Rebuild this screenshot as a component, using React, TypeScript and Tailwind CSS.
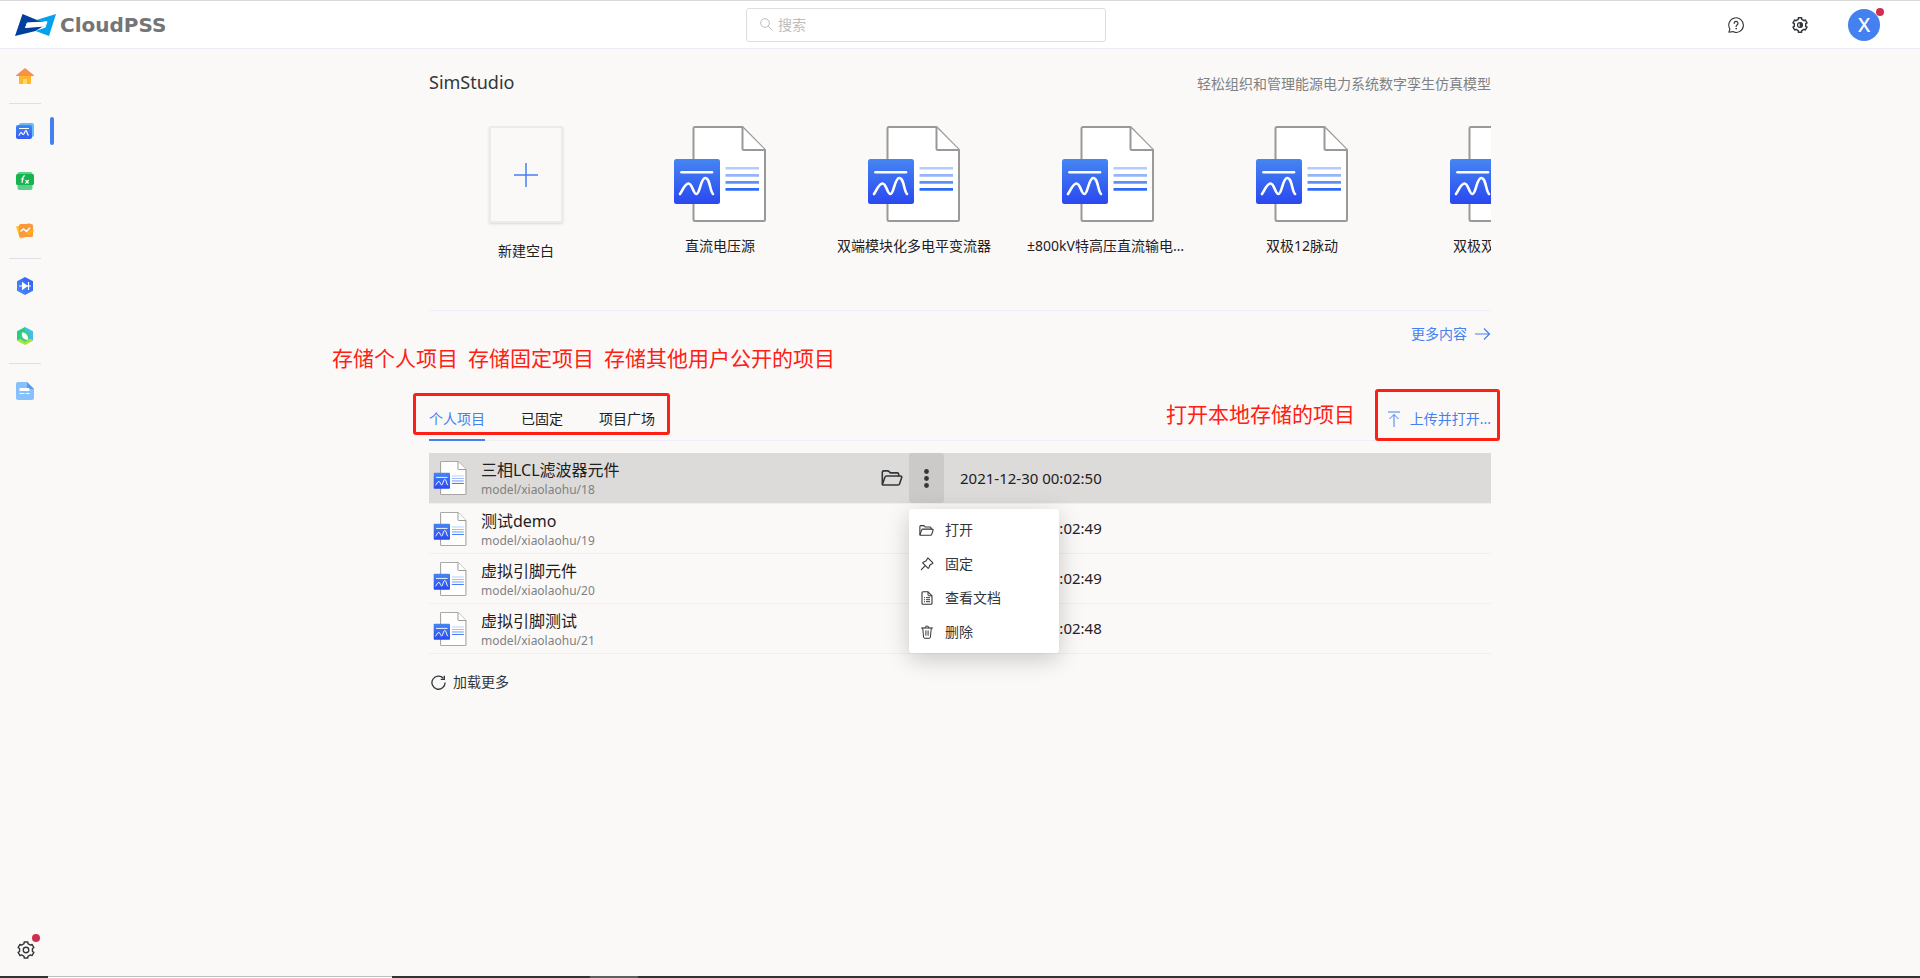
import React from "react";

type IconProps = { className?: string };

const gearPath = (() => {
  const points: string[] = [];
  const at = (deg: number, r: number) => {
    const a = (deg * Math.PI) / 180;
    return `${(12 + r * Math.cos(a)).toFixed(2)} ${(12 + r * Math.sin(a)).toFixed(2)}`;
  };
  for (let k = 0; k < 6; k++) {
    const a = -90 + k * 60;
    points.push(at(a - 13, 11), at(a + 13, 11), at(a + 17, 8.8), at(a + 43, 8.8));
  }
  return `M${points.join("L")}Z`;
})();

function Gear({ className, half }: IconProps & { half?: boolean }) {
  return (
    <svg viewBox="0 0 24 24" className={className} fill="none" stroke="currentColor" strokeLinejoin="round" aria-hidden="true">
      <path d={gearPath} strokeWidth={half ? 2.2 : 1.8} />
      <circle cx="12" cy="12" r="3.7" strokeWidth="1.8" />
      {half && <path d="M12 8.3a3.7 3.7 0 0 1 0 7.4z" fill="currentColor" />}
    </svg>
  );
}

function FolderOpen({ className }: IconProps) {
  return (
    <svg viewBox="0 0 22 16" className={className} fill="none" stroke="currentColor" strokeWidth="1.6" strokeLinejoin="round" strokeLinecap="round" aria-hidden="true">
      <path d="M1.3 14V2.3a1.4 1.4 0 0 1 1.4-1.4h4c.5 0 .9.2 1.2.5l1.4 1.5h6.9a1.5 1.5 0 0 1 1.5 1.5v1.5" />
      <path d="M1.5 14 4 7.1a1.6 1.6 0 0 1 1.5-1.1h14.2c.8 0 1.3.7 1 1.5l-2.2 6.4a1.5 1.5 0 0 1-1.4 1.1H2.3c-.6 0-1-.4-.8-1z" />
    </svg>
  );
}

function Pin({ className }: IconProps) {
  return (
    <svg viewBox="0 0 14 14" className={className} fill="none" stroke="currentColor" strokeWidth="1.1" strokeLinejoin="round" strokeLinecap="round" aria-hidden="true">
      <path d="M8.4 1.3 12.7 5.6c.3.3.2.7-.1.9L9.9 8 8.8 10.9c-.1.4-.6.5-.9.2L2.9 6.1c-.3-.3-.2-.8.2-.9L6 4.1 7.5 1.4c.2-.3.6-.4.9-.1zM5.300 8.700 1.300 12.700" />
    </svg>
  );
}

function DocText({ className }: IconProps) {
  return (
    <svg viewBox="0 0 14 14" className={className} fill="none" stroke="currentColor" strokeLinejoin="round" aria-hidden="true">
      <path d="M3 .8h5l4 4v7.400a1 1 0 0 1-1 1H3a1 1 0 0 1-1-1V1.800a1 1 0 0 1 1-1z" strokeWidth="1.100" />
      <path d="M8 .8v3.200a.8.8 0 0 0 .8.8H12M4 6.700h1M6 6.700h4M4 8.700h1M6 8.700h4M4 10.700h1M6 10.700h4" />
    </svg>
  );
}

function Trash({ className }: IconProps) {
  return (
    <svg viewBox="0 0 14 14" className={className} fill="none" stroke="currentColor" strokeLinejoin="round" strokeLinecap="round" aria-hidden="true">
      <path d="M1.500 3h11M5 3a2 2 0 0 1 4 0M2.700 3l.9 9.200a1.200 1.200 0 0 0 1.200 1.100h4.400a1.200 1.200 0 0 0 1.200-1.100L11.300 3M5.900 5.800v4.500M8.100 5.800v4.500" />
    </svg>
  );
}

function Help({ className }: IconProps) {
  return (
    <svg viewBox="0 0 16 16" className={className} fill="none" stroke="currentColor" strokeLinecap="round" strokeLinejoin="round" aria-hidden="true">
      <path d="M.9 15.200 1.900 12A7.300 7.300 0 1 1 4.700 14.600Z" strokeWidth="1.100" />
      <path d="M6.200 6.300a1.900 1.900 0 1 1 2.800 1.600c-.6.4-.9.8-.9 1.500v.2" strokeWidth="1.200" />
      <circle cx="8.100" cy="11.700" r=".3" />
    </svg>
  );
}

function Reload({ className }: IconProps) {
  return (
    <svg viewBox="0 0 16 16" className={className} fill="none" stroke="currentColor" strokeWidth="1.400" aria-hidden="true">
      <path d="M13.200 3.500A7 7 0 1 0 15 8" />
      <path d="M14.200.8v3.800h-3.800" />
    </svg>
  );
}

function FileArt({ className, id, outline = 2 }: IconProps & { id: string; outline?: number }) {
  return (
    <svg viewBox="0 0 96 96" className={className} fill="none" aria-hidden="true">
      <defs>
        <linearGradient id={id} x1="0" y1="0" x2="0" y2="1">
          <stop offset="0" stopColor="#4586f2" />
          <stop offset="1" stopColor="#2a48f0" />
        </linearGradient>
      </defs>
      <path d="M23 1h47.500L93 24v69.500a1.500 1.500 0 0 1-1.500 1.500H23a1.500 1.500 0 0 1-1.500-1.500v-91A1.500 1.500 0 0 1 23 1z" fill="#fff" stroke="#999997" strokeWidth={outline} />
      <path d="M70.500 1.500v21a1.500 1.500 0 0 0 1.500 1.500h21" fill="#fff" stroke="#999997" strokeWidth={outline} />
      <rect x="2" y="33" width="46" height="45" rx="2.500" fill={`url(#${id})`} />
      <path d="M9.500 46.300h30.500" stroke="#fff" strokeWidth="2.600" strokeLinecap="round" />
      <path d="M8 68c2-2 4.500-10.500 8.500-10.500S21 68 24.500 68s4-16 8.800-16S38 66 41 68" stroke="#fff" strokeWidth="2.600" strokeLinecap="round" />
      <path d="M53.500 42.300H87" stroke="#b3cbff" strokeWidth="2.600" />
      <path d="M53.500 49.400H87" stroke="#94b5fa" strokeWidth="2.600" />
      <path d="M53.500 56.400H87" stroke="#5e90f9" strokeWidth="2.600" />
      <path d="M53.500 63.400H87" stroke="#2f6bf8" strokeWidth="2.600" />
    </svg>
  );
}

function HomeArt() {
  return (
    <svg viewBox="0 0 18 18" className="size-[18px]" aria-hidden="true">
      <path d="M3 8h12v8a1 1 0 0 1-1 1H4a1 1 0 0 1-1-1z" fill="#ffb52e" />
      <path d="M9 1 18 8.200c.2.500 0 .8-.5.8H.5C0 9-.2 8.700.1 8.200z" fill="#f6924a" />
      <path d="M7 12h4v5H7z" fill="#ffd766" />
    </svg>
  );
}

function SimArt() {
  return (
    <svg viewBox="0 0 18 18" className="size-[18px]" aria-hidden="true">
      <defs>
        <linearGradient id="simNav" x1="0" y1="0" x2="0" y2="1">
          <stop offset="0" stopColor="#3f86f5" />
          <stop offset="1" stopColor="#3a5bf2" />
        </linearGradient>
      </defs>
      <rect x="3" y="1" width="15" height="14" rx="2" fill="#66bdfb" />
      <rect x="0" y="3" width="16" height="14" rx="2" fill="url(#simNav)" />
      <path d="M3 6.500h10M2.500 13.500c1.500 0 1.300-3 2.500-3s1 2 2.200 2S8.800 8.500 10 8.500s.8 4.500 2.700 5" fill="none" stroke="#fff" strokeWidth="1.200" />
    </svg>
  );
}

function FxArt() {
  return (
    <svg viewBox="0 0 18 18" className="size-[18px]" aria-hidden="true">
      <rect x="1.500" y="0" width="15" height="18" rx="2" fill="#58d08a" />
      <rect x="0" y="2" width="18" height="11" rx="1.500" fill="#17b34c" />
      <path d="M9 4c-1.500-.4-2 .6-2.200 2L6 10.800M4.800 7h3.400M9.500 8.200l3 3.300M12.800 8l-3.500 3.700" fill="none" stroke="#fff" strokeWidth="1.200" />
    </svg>
  );
}

function ChartArt() {
  return (
    <svg viewBox="0 0 18 18" className="size-[18px]" aria-hidden="true">
      <path d="M0 4.500 14 1l3 12-12 3.500a1 1 0 0 1-1.300-.8z" fill="#ffc02e" />
      <rect x="3" y="2" width="14" height="13" rx="1.500" fill="#fb9a3c" />
      <path d="M4.500 9.500 7.500 7l3 2.500L14 5.800" fill="none" stroke="#fff" strokeWidth="1.500" />
      <path d="M17 7.500 18 9l-4.500 3.500H11l.5-2z" fill="#ffb700" />
    </svg>
  );
}

function DiodeArt() {
  return (
    <svg viewBox="0 0 18 18" className="size-[18px]" aria-hidden="true">
      <defs>
        <linearGradient id="diodeNav" x1="1" y1="0" x2="0" y2="1">
          <stop offset="0" stopColor="#2f5cf6" />
          <stop offset="1" stopColor="#4a90f7" />
        </linearGradient>
      </defs>
      <path d="M9 0l8 4.300v9.400L9 18 1 13.700V4.300z" fill="url(#diodeNav)" />
      <path d="M6 4.800 12 9l-6 4.200z" fill="#fff" />
      <path d="M3 9h12M12.500 5v8" stroke="#fff" strokeWidth="1.200" />
    </svg>
  );
}

function LeafArt() {
  return (
    <svg viewBox="0 0 18 18" className="size-[18px]" aria-hidden="true">
      <path d="M9 0 1 4.300v9.400L9 9z" fill="#1fcf86" />
      <path d="M9 0l8 4.300v9.400L9 9z" fill="#42bdf2" />
      <path d="M1 13.700 9 9l8 4.700L9 18z" fill="#a6e436" />
      <path d="M9 3.200 14 6v6l-5 2.800L4 12V6z" fill="#3dcb86" />
      <path d="M6 5.500c3.500 0 6.300 2.500 6.200 7.300C8 13 5.300 10.500 6 5.500z" fill="#fff" />
    </svg>
  );
}

function NoteArt() {
  return (
    <svg viewBox="0 0 18 18" className="size-[18px]" aria-hidden="true">
      <path d="M2 0h9l7 7v9a2 2 0 0 1-2 2H2a2 2 0 0 1-2-2V2a2 2 0 0 1 2-2z" fill="#86c1fd" />
      <path d="M11 0l7 7h-5.500A1.500 1.500 0 0 1 11 5.500z" fill="#4f9cf5" />
      <path d="M4 6h8.500a1 1 0 0 1 1 1v2h-10V6.500z" fill="#fff" />
      <path d="M3.500 11.500h5M10 11.500h3.500" stroke="#fff" strokeWidth="1" />
    </svg>
  );
}

const navGroups = [
  [{ label: "首页", art: <HomeArt />, active: false }],
  [
    { label: "SimStudio", art: <SimArt />, active: true },
    { label: "FuncStudio", art: <FxArt />, active: false },
    { label: "AppStudio", art: <ChartArt />, active: false },
  ],
  [
    { label: "EMTLab", art: <DiodeArt />, active: false },
    { label: "IESLab", art: <LeafArt />, active: false },
  ],
  [{ label: "文档", art: <NoteArt />, active: false }],
];

const templates = ["直流电压源", "双端模块化多电平变流器", "±800kV特高压直流输电工程", "双极12脉动", "双极双12脉动"];

const projects = [
  { id: 18, name: "三相LCL滤波器元件", time: "2021-12-30 00:02:50" },
  { id: 19, name: "测试demo", time: "2021-12-30 00:02:49" },
  { id: 20, name: "虚拟引脚元件", time: "2021-12-30 00:02:49" },
  { id: 21, name: "虚拟引脚测试", time: "2021-12-30 00:02:48" },
];

const menuItems = [
  { label: "打开", icon: <FolderOpen className="h-[11px] w-[15px]" /> },
  { label: "固定", icon: <Pin className="size-[14px]" /> },
  { label: "查看文档", icon: <DocText className="size-[14px]" /> },
  { label: "删除", icon: <Trash className="size-[14px]" /> },
];

function Header() {
  return (
    <header className="flex h-[49px] shrink-0 items-center border-t border-b border-t-[#d9d9d9] border-b-[#ececf5] bg-white">
      <div className="flex flex-1 items-center gap-1 pl-[15px]">
        <svg viewBox="0 0 41 22" className="h-[22px] w-[41px] shrink-0" aria-hidden="true">
          <path d="M7.500 0 22 6 31 7.500 12 9 10 14l21-3.500L20.500 17 0 22z" fill="#003f9c" />
          <path d="M20.500 6.300 41 0 34 22 20.500 17 30.500 13.500 32.500 7.500z" fill="#04a2ec" />
          <path d="M12 8.500 31.500 7.500 30 12.500 10 14z" fill="#fff" />
        </svg>
        <span className="font-['DejaVu_Sans',sans-serif] text-[20px] leading-6 font-bold text-[#757575]">CloudPSS</span>
      </div>
      <label className="flex h-[34px] w-[360px] items-center gap-[5px] rounded-[3px] border border-[#dddde4] pl-[13px]">
        <svg viewBox="0 0 13 13" className="size-[13px]" fill="none" stroke="#bcbcc0" aria-hidden="true">
          <circle cx="5" cy="5" r="4.300" />
          <path d="M8.200 8.200 12.500 12.500" />
        </svg>
        <input type="search" placeholder="搜索" aria-label="搜索" className="min-w-0 flex-1 bg-transparent text-sm outline-none placeholder:text-[#bdbdbd]" />
      </label>
      <div className="flex flex-1 items-center justify-end gap-12 pr-10 pl-[43px] text-[#333639]">
        <button type="button" aria-label="帮助">
          <Help className="size-4" />
        </button>
        <button type="button" aria-label="设置">
          <Gear half className="size-4" />
        </button>
        <button type="button" aria-label="账户" className="relative -ml-2 flex size-8 items-center justify-center rounded-full bg-[#4480f0] text-[20px] leading-8 font-medium text-white">
          X
          <span className="absolute -top-px -right-1 size-2 rounded-full bg-[#cf2e50]" />
        </button>
      </div>
    </header>
  );
}

function Sidebar() {
  return (
    <nav className="flex w-[54px] shrink-0 flex-col pt-0.5">
      {navGroups.map((group, i) => (
        <React.Fragment key={i}>
          {i > 0 && <hr className="mx-[9px] my-0.5 w-8 border-[#dfdee6]" />}
          {group.map((item) => (
            <a key={item.label} href="#" aria-label={item.label} className="flex h-[50px] items-center justify-between pl-4">
              {item.art}
              {item.active && <span className="h-7 w-1 rounded-sm bg-[#4480f0]" />}
            </a>
          ))}
        </React.Fragment>
      ))}
      <button type="button" aria-label="设置" className="mt-auto mb-px flex h-[50px] items-center pl-[17px] text-[#333639]">
        <span className="relative">
          <Gear className="size-[18px]" />
          <span className="absolute -top-[7px] -right-[5px] size-2 rounded-full bg-[#cf2e50]" />
        </span>
      </button>
    </nav>
  );
}

function Templates() {
  return (
    <section>
      <div className="flex h-[77px] items-start justify-between pt-[19px]">
        <h1 className="text-lg leading-7 text-[#333639]">SimStudio</h1>
        <p className="pt-1.5 text-sm text-[#7f8183]">轻松组织和管理能源电力系统数字孪生仿真模型</p>
      </div>
      <div className="flex h-[185px] overflow-hidden border-b border-[#efeef7]">
        <button type="button" className="flex w-[194px] shrink-0 flex-col items-center gap-[18px]">
          <span className="flex h-[97px] w-[74px] items-center justify-center border-2 border-[#ebebe9] shadow-sm">
            <svg viewBox="0 0 24 24" className="size-6" stroke="#4480f0" strokeWidth="1.500" aria-hidden="true">
              <path d="M12 0v24M0 12h24" />
            </svg>
          </span>
          <span className="text-sm">新建空白</span>
        </button>
        {templates.map((name, i) => (
          <button type="button" key={name} className="flex w-[194px] shrink-0 flex-col items-center gap-3.5 px-4">
            <FileArt className="size-24" id={`tpl${i}`} />
            <span className="w-full truncate text-center text-sm">{name}</span>
          </button>
        ))}
      </div>
      <div className="flex justify-end pt-[13px]">
        <a href="#" className="flex items-center gap-2 text-sm text-[#4480f0]">
          更多内容
          <svg viewBox="0 0 16 12" className="h-3 w-4" fill="none" stroke="currentColor" strokeWidth="1.200" aria-hidden="true">
            <path d="M0 6h14.500M9 .5 14.500 6 9 11.500" />
          </svg>
        </a>
      </div>
    </section>
  );
}

function Tabs() {
  return (
    <div className="relative mt-[53px] flex h-[44px] justify-between border-b border-[#efeef7]">
      <div role="tablist" className="flex gap-9 text-sm">
        <button type="button" role="tab" aria-selected="true" className="-mb-px border-b-2 border-[#4480f0] pt-0.5 text-[#4480f0]">
          个人项目
        </button>
        <button type="button" role="tab" aria-selected="false">
          已固定
        </button>
        <button type="button" role="tab" aria-selected="false">
          项目广场
        </button>
      </div>
      <button type="button" className="flex items-center gap-2.5 text-sm text-[#4480f0]">
        <svg viewBox="0 0 12 16" className="h-4 w-3" fill="none" stroke="currentColor" aria-hidden="true">
          <path d="M0 1h12M6 3.500V16M1.500 8 6 3.500 10.500 8" />
        </svg>
        上传并打开...
      </button>

      <div className="absolute -top-[54px] -left-[97px] flex gap-2.5 text-[21px] leading-[30px] whitespace-nowrap text-[#ff2015]">
        <span>存储个人项目</span>
        <span>存储固定项目</span>
        <span>存储其他用户公开的项目</span>
      </div>
      <div className="pointer-events-none absolute -top-1 -left-4 h-[42px] w-[257px] rounded-[3px] border-[3px] border-[#ff2015]" />
      <div className="absolute top-0.5 right-[136px] text-[21px] leading-[30px] whitespace-nowrap text-[#ff2015]">打开本地存储的项目</div>
      <div className="pointer-events-none absolute -top-2 -right-[9px] h-[52px] w-[125px] rounded-[3px] border-[3px] border-[#ff2015]" />
    </div>
  );
}

function ContextMenu() {
  return (
    <div role="menu" className="absolute top-14 left-0 z-10 w-[150px] rounded-[3px] bg-white py-1 shadow-[0_6px_24px_rgba(0,0,0,0.2)]">
      {menuItems.map((item) => (
        <button type="button" role="menuitem" key={item.label} className="flex h-[34px] w-full items-center gap-[11px] pl-2.5 text-sm text-[#333639]">
          <span className="flex w-[15px] justify-center">{item.icon}</span>
          {item.label}
        </button>
      ))}
    </div>
  );
}

function Projects() {
  return (
    <section>
      <Tabs />
      <table className="mt-3 w-full table-fixed border-separate border-spacing-0 text-left">
        <colgroup>
          <col className="w-[445px]" />
          <col className="w-[70px]" />
          <col />
        </colgroup>
        <tbody>
          {projects.map((p, i) => (
            <tr key={p.id} className={i === 0 ? "h-[51px] bg-[#dcdbd9]" : "h-[50px]"}>
              <td className="border-b border-[#efeef7] p-0 pl-1">
                <div className="flex items-center gap-3.5">
                  <FileArt className="size-[34px]" id={`row${p.id}`} outline={2.8} />
                  <div className="pt-1">
                    <div className="text-base leading-5">{p.name}</div>
                    <div className="text-xs leading-5 text-[#7f8183]">model/xiaolaohu/{p.id}</div>
                  </div>
                </div>
              </td>
              <td className="border-b border-[#efeef7] p-0">
                {i === 0 && (
                  <div className="flex h-[50px] text-[#333639]">
                    <button type="button" aria-label="打开" className="flex w-[35px] items-center justify-center">
                      <FolderOpen className="h-4 w-[22px]" />
                    </button>
                    <div className="relative">
                      <button type="button" aria-label="更多操作" className="flex h-[50px] w-[35px] items-center justify-center rounded-[3px] bg-[#cbcac8]">
                        <svg viewBox="0 0 5 19" className="h-[19px] w-[5px]" fill="currentColor" aria-hidden="true">
                          <circle cx="2.500" cy="2.500" r="2.400" />
                          <circle cx="2.500" cy="9.500" r="2.400" />
                          <circle cx="2.500" cy="16.500" r="2.400" />
                        </svg>
                      </button>
                      <ContextMenu />
                    </div>
                  </div>
                )}
              </td>
              <td className="border-b border-[#efeef7] p-0 pl-4 text-[15px]">{p.time}</td>
            </tr>
          ))}
        </tbody>
      </table>
      <button type="button" className="mt-[18px] ml-0.5 flex items-center gap-[7px] text-sm text-[#333639]">
        <Reload className="size-[15px]" />
        加载更多
      </button>
    </section>
  );
}

function BottomStrip() {
  return (
    <div className="flex h-0.5 shrink-0 bg-[#333333]">
      <div className="w-12" />
      <div className="w-[344px] border-t border-[#bfbfbf] bg-white" />
      <div className="w-[198px]" />
      <div className="w-12 bg-[#5f5f5f]" />
    </div>
  );
}

export default function App() {
  return (
    <div className="flex min-h-screen flex-col bg-[#faf9f8] font-['Noto_Sans','Noto_Sans_CJK_SC',sans-serif] text-[#1f2022]">
      <Header />
      <div className="flex flex-1">
        <Sidebar />
        <main className="flex min-w-0 flex-1 justify-center pr-[54px]">
          <div className="w-full max-w-[1062px]">
            <Templates />
            <Projects />
          </div>
        </main>
      </div>
      <BottomStrip />
    </div>
  );
}
